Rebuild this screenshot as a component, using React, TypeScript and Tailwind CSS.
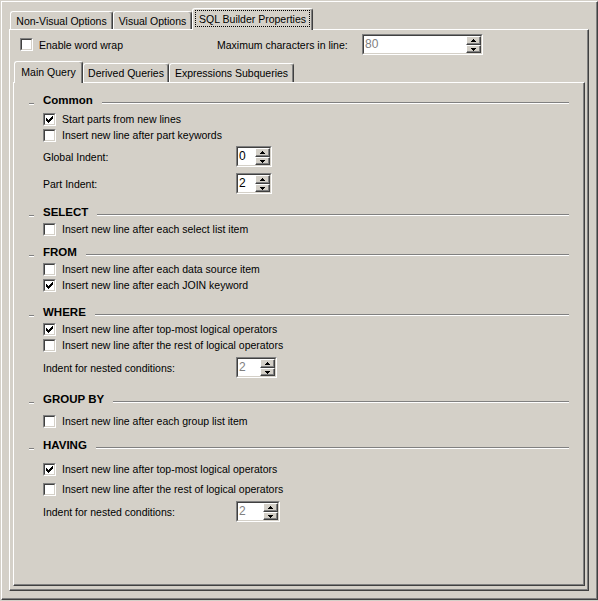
import React from 'react';

type Item =
  | { kind: 'title'; text: string; mt: string }
  | { kind: 'check'; text: string; checked?: boolean; mt: string }
  | { kind: 'spin'; label: string; value: string; width: string; disabled?: boolean; mt: string };

const items: Item[] = [
  { kind: 'title', text: 'Common', mt: 'mt-0' },
  { kind: 'check', text: 'Start parts from new lines', checked: true, mt: 'mt-[3px]' },
  { kind: 'check', text: 'Insert new line after part keywords', mt: 'mt-0' },
  { kind: 'spin', label: 'Global Indent:', value: '0', width: 'w-[36px]', mt: 'mt-[3px]' },
  { kind: 'spin', label: 'Part Indent:', value: '2', width: 'w-[36px]', mt: 'mt-[6px]' },
  { kind: 'title', text: 'SELECT', mt: 'mt-[10px]' },
  { kind: 'check', text: 'Insert new line after each select list item', mt: 'mt-px' },
  { kind: 'title', text: 'FROM', mt: 'mt-[7px]' },
  { kind: 'check', text: 'Insert new line after each data source item', mt: 'mt-px' },
  { kind: 'check', text: 'Insert new line after each JOIN keyword', checked: true, mt: 'mt-0' },
  { kind: 'title', text: 'WHERE', mt: 'mt-[11px]' },
  { kind: 'check', text: 'Insert new line after top-most logical operators', checked: true, mt: 'mt-px' },
  { kind: 'check', text: 'Insert new line after the rest of logical operators', mt: 'mt-0' },
  { kind: 'spin', label: 'Indent for nested conditions:', value: '2', width: 'w-[41px]', disabled: true, mt: 'mt-[4px]' },
  { kind: 'title', text: 'GROUP BY', mt: 'mt-[13px]' },
  { kind: 'check', text: 'Insert new line after each group list item', mt: 'mt-[6px]' },
  { kind: 'title', text: 'HAVING', mt: 'mt-[8px]' },
  { kind: 'check', text: 'Insert new line after top-most logical operators', checked: true, mt: 'mt-[8px]' },
  { kind: 'check', text: 'Insert new line after the rest of logical operators', mt: 'mt-[4px]' },
  { kind: 'spin', label: 'Indent for nested conditions:', value: '2', width: 'w-[44px]', disabled: true, mt: 'mt-[4px]' },
];

// 7x7 pixel check mark, rows of [x, y, width]
const tick: [number, number, number][] = [
  [6, 0, 1],
  [5, 1, 2],
  [0, 2, 1],
  [4, 2, 3],
  [0, 3, 2],
  [3, 3, 3],
  [0, 4, 5],
  [1, 5, 3],
  [2, 6, 1],
];

function CheckBox({ checked }: { checked?: boolean }) {
  return (
    <div className="w-[13px] h-[13px] shrink-0 flex border border-t-[#808080] border-l-[#808080] border-b-white border-r-white">
      <div className="flex-1 flex items-center justify-center bg-white border border-t-[#404040] border-l-[#404040] border-b-[#d4d0c8] border-r-[#d4d0c8]">
        {checked ? (
          <svg width="7" height="7" viewBox="0 0 7 7" shapeRendering="crispEdges">
            {tick.map(([x, y, w], i) => (
              <rect key={i} x={x} y={y} width={w} height={1} fill="#000" />
            ))}
          </svg>
        ) : null}
      </div>
    </div>
  );
}

function Arrow({ up }: { up?: boolean }) {
  return (
    <svg width="5" height="3" viewBox="0 0 5 3" shapeRendering="crispEdges">
      {up ? (
        <>
          <rect x="2" y="0" width="1" height="1" fill="#000" />
          <rect x="1" y="1" width="3" height="1" fill="#000" />
          <rect x="0" y="2" width="5" height="1" fill="#000" />
        </>
      ) : (
        <>
          <rect x="0" y="0" width="5" height="1" fill="#000" />
          <rect x="1" y="1" width="3" height="1" fill="#000" />
          <rect x="2" y="2" width="1" height="1" fill="#000" />
        </>
      )}
    </svg>
  );
}

function Spin({ value, width, disabled }: { value: string; width: string; disabled?: boolean }) {
  return (
    <div
      className={`${width} h-[21px] shrink-0 flex border border-t-[#808080] border-l-[#808080] border-b-white border-r-white`}
    >
      <div className="flex-1 flex bg-white border border-t-[#404040] border-l-[#404040] border-b-[#d4d0c8] border-r-[#d4d0c8]">
        <span
          className={`flex-1 pl-px text-[12px] leading-[17px] ${disabled ? 'text-[#808080]' : 'text-black'}`}
        >
          {value}
        </span>
        <div className="w-[15px] flex flex-col">
          <div className="h-[9px] flex items-center justify-center bg-[#d4d0c8] border-t border-l border-white border-r border-b border-r-[#404040] border-b-[#404040] shadow-[inset_-1px_-1px_0_#808080]">
            <Arrow up />
          </div>
          <div className="h-[8px] flex items-center justify-center bg-[#d4d0c8] border-t border-l border-white border-r border-b border-r-[#404040] border-b-[#404040] shadow-[inset_-1px_-1px_0_#808080]">
            <Arrow />
          </div>
        </div>
      </div>
    </div>
  );
}

function Tab({
  label,
  width,
  selected,
  focus,
  inner,
}: {
  label: string;
  width: string;
  selected?: boolean;
  focus?: boolean;
  inner?: boolean;
}) {
  if (selected) {
    return (
      <div
        className={`${width} h-[22px] -mb-px relative z-10 shrink-0 flex items-center justify-center pb-[2px] whitespace-nowrap bg-[#d4d0c8] border-t border-l border-white border-r border-r-[#404040] rounded-t-[3px] shadow-[inset_-1px_0_0_#808080]`}
      >
        {focus ? (
          <span className="h-[17px] px-[3px] flex items-center border border-dotted border-black">
            {label}
          </span>
        ) : (
          <span>{label}</span>
        )}
      </div>
    );
  }
  return (
    <div
      className={`${width} ${inner ? 'h-[19px]' : 'h-[18px]'} shrink-0 flex items-center justify-center whitespace-nowrap bg-[#d4d0c8] border-t border-l border-white border-r border-r-[#404040] rounded-t-[3px] shadow-[inset_-1px_0_0_#808080]`}
    >
      {label}
    </div>
  );
}

function Row({ item }: { item: Item }) {
  if (item.kind === 'title') {
    return (
      <div className={`flex items-start h-4 ${item.mt}`}>
        <div className="w-[5px] h-[2px] mt-[11px] border-t border-b border-t-[#808080] border-b-white" />
        <span className="ml-[9px] text-[11.5px] font-bold whitespace-nowrap">{item.text}</span>
        <div className="flex-1 ml-[9px] h-[2px] mt-[10px] border-t border-b border-t-[#808080] border-b-white" />
      </div>
    );
  }
  if (item.kind === 'check') {
    return (
      <div className={`flex items-center h-4 pl-[14px] gap-[6px] ${item.mt}`}>
        <CheckBox checked={item.checked} />
        <span className="whitespace-nowrap">{item.text}</span>
      </div>
    );
  }
  return (
    <div className={`flex items-center h-[21px] pl-[14px] ${item.mt}`}>
      <span className="w-[193px] whitespace-nowrap">{item.label}</span>
      <Spin value={item.value} width={item.width} disabled={item.disabled} />
    </div>
  );
}

export default function App() {
  return (
    <div className="w-[598px] h-[601px] bg-[#d4d0c8] pt-px pl-px text-[10.5px] leading-4 text-black font-['Liberation_Sans',Arial,sans-serif]">
      <div className="w-[597px] h-[599px] flex flex-col pt-[6px] pl-[7px] pr-[8px] pb-[8px] border-t border-l border-white border-r border-b border-r-[#404040] border-b-[#404040] shadow-[inset_-1px_-1px_0_#808080]">
        <div className="flex items-end h-[21px] pl-px">
          <Tab label="Non-Visual Options" width="w-[103px]" />
          <Tab label="Visual Options" width="w-[79px]" />
          <Tab label="SQL Builder Properties" width="w-[121px]" selected focus />
        </div>

        <div className="flex-1 flex flex-col pt-[4px] border-t border-l border-white border-r border-b border-r-[#404040] border-b-[#404040] shadow-[inset_-1px_-1px_0_#808080]">
          <div className="flex items-center h-[21px]">
            <div className="w-[207px] pl-[10px] flex items-center gap-[6px]">
              <CheckBox />
              <span className="whitespace-nowrap">Enable word wrap</span>
            </div>
            <span className="w-[145px] whitespace-nowrap">Maximum characters in line:</span>
            <Spin value="80" width="w-[121px]" disabled />
          </div>

          <div className="flex-1 flex flex-col mt-[6px] mx-[3px] mb-[4px]">
            <div className="flex items-end h-[21px] pl-px">
              <Tab label="Main Query" width="w-[69px]" selected inner />
              <Tab label="Derived Queries" width="w-[86px]" inner />
              <Tab label="Expressions Subqueries" width="w-[125px]" inner />
            </div>

            <div className="flex-1 flex flex-col pt-[9px] px-[15px] border-t border-l border-white border-r border-b border-r-[#404040] border-b-[#404040] shadow-[inset_-1px_-1px_0_#808080]">
              {items.map((item, i) => (
                <Row key={i} item={item} />
              ))}
            </div>
          </div>
        </div>
      </div>
    </div>
  );
}
